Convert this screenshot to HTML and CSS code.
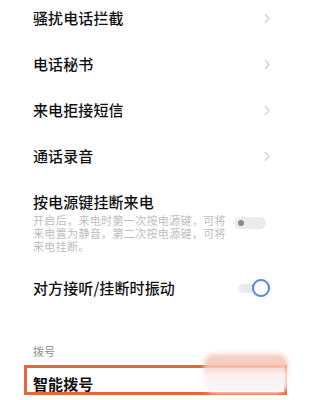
FILE: index.html
```html
<!DOCTYPE html>
<html lang="zh-CN">
<head>
<meta charset="utf-8">
<link rel="stylesheet" href="styles.css">
</head>
<body>
<div class="page">
  <div class="list">
    <div class="row"><span class="title">骚扰电话拦截</span><svg class="chev" viewBox="0 0 6 11"><path d="M1 1l4 4.5-4 4.5"/></svg></div>
    <div class="row"><span class="title">电话秘书</span><svg class="chev" viewBox="0 0 6 11"><path d="M1 1l4 4.5-4 4.5"/></svg></div>
    <div class="row"><span class="title">来电拒接短信</span><svg class="chev" viewBox="0 0 6 11"><path d="M1 1l4 4.5-4 4.5"/></svg></div>
    <div class="row"><span class="title">通话录音</span><svg class="chev" viewBox="0 0 6 11"><path d="M1 1l4 4.5-4 4.5"/></svg></div>
    <div class="block">
      <div class="texts">
        <div class="title">按电源键挂断来电</div>
        <div class="desc">开启后，来电时第一次按电源键，可将来电置为静音，第二次按电源键，可将来电挂断。</div>
      </div>
      <div class="switch off"><span class="knob"></span></div>
    </div>
    <div class="row"><span class="title">对方接听/挂断时振动</span><div class="switch on"><span class="knob"></span></div></div>
  </div>
  <div class="section">拨号</div>
  <div class="boxwrap">
    <div class="hl"><span class="title">智能拨号</span></div>
    <div class="blur"></div>
  </div>
</div>
</body>
</html>
```

FILE: styles.css
```css
html, body {
  margin: 0;
  padding: 0;
  background: #fff;
}
body {
  width: 302px;
  height: 400px;
  overflow: hidden;
  font-family: "Noto Sans CJK SC", "Noto Sans", sans-serif;
}
.page {
  position: relative;
}
.list {
  margin-top: -5px;
}
.row {
  height: 46px;
  display: flex;
  align-items: center;
  justify-content: space-between;
  padding: 0 32px 0 33px;
}
.title {
  font-size: 15px;
  line-height: 20px;
  color: #111;
  font-weight: 500;
  letter-spacing: 0.1px;
}
.chev {
  width: 6px;
  height: 11px;
  fill: none;
  stroke: #d0d0d0;
  stroke-width: 1.3;
}
.block {
  display: flex;
  align-items: center;
  justify-content: space-between;
  padding: 13px 36px 12px 33px;
}
.texts {
  width: 200px;
}
.desc {
  font-size: 11px;
  line-height: 13px;
  letter-spacing: 0.35px;
  color: #bdbdbd;
  margin-top: 2px;
}
.switch {
  position: relative;
  width: 32px;
  height: 12px;
  border-radius: 6px;
}
.switch.off {
  background: #ebebeb;
}
.switch.off .knob {
  position: absolute;
  left: 4px;
  top: 3px;
  width: 6px;
  height: 6px;
  border-radius: 50%;
  background: #888;
}
.switch.on {
  background: linear-gradient(to right, #ebedf1, #dfe5ef);
  height: 9px;
  margin-right: 4px;
  width: 28px;
}
.switch.on .knob {
  position: absolute;
  right: -4px;
  top: -5px;
  width: 14px;
  height: 14px;
  border-radius: 50%;
  background: #fff;
  border: 2px solid #5a8ad8;
  box-shadow: 0 0 1px #9bb8e8;
}
.section {
  margin-top: 33px;
  padding-left: 33px;
  font-size: 11px;
  line-height: 14px;
  color: #8e8e8e;
}
.boxwrap {
  position: relative;
  margin-top: 7px;
}
.hl {
  margin-left: 24px;
  width: 251px;
  border: 3px solid #e8673a;
  padding: 8px 0 0 6px;
  height: 16px;
}
.hl .title {
  display: block;
  line-height: 16px;
  font-weight: 700;
}
.blur {
  position: absolute;
  left: 204px;
  top: -11px;
  width: 84px;
  height: 39px;
  border-radius: 10px;
  background: linear-gradient(to bottom, rgba(243,185,165,0.7) 0%, rgba(245,195,178,0.85) 30%, rgba(250,240,238,0.97) 50%, rgba(247,248,250,0.97) 100%);
  filter: blur(2px);
}
```
